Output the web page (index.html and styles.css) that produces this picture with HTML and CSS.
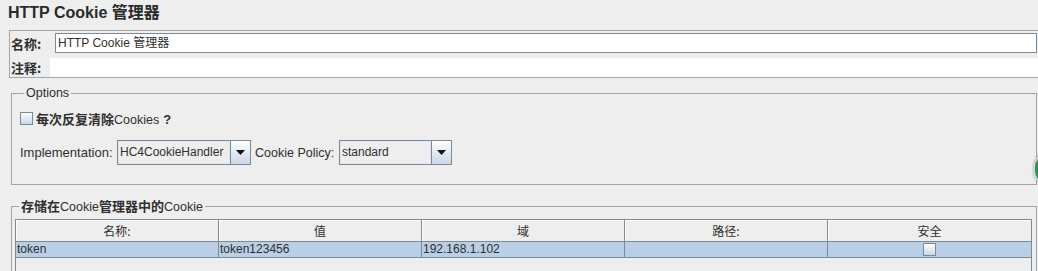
FILE: index.html
```html
<!DOCTYPE html>
<html lang="zh">
<head>
<meta charset="utf-8">
<title>HTTP Cookie 管理器</title>
<link rel="stylesheet" href="styles.css">
</head>
<body>
<div class="title">HTTP Cookie 管理器</div>

<div class="namebox">
  <div class="name-row">
    <span class="lbl lbl-name">名称:</span>
    <div class="input">HTTP Cookie 管理器</div>
  </div>
  <div class="comment-row">
    <span class="lbl lbl-comment">注释:</span>
    <div class="textarea"></div>
  </div>
</div>

<fieldset class="group options">
  <legend>Options</legend>
  <div class="chk-row">
    <span class="checkbox"></span>
    <span class="chk-label"><b class="cjk">每次反复清除</b>Cookies<b class="q">?</b></span>
  </div>
  <div class="combo-row">
    <span class="lbl2 lbl-impl">Implementation:</span>
    <div class="combo combo-impl">
      <span class="combo-text">HC4CookieHandler</span>
      <span class="combo-btn"><svg width="9" height="5" viewBox="0 0 9 5"><path d="M0 0H9L4.5 5Z" fill="#111"/></svg></span>
    </div>
    <span class="lbl2 lbl-policy">Cookie Policy:</span>
    <div class="combo combo-policy">
      <span class="combo-text">standard</span>
      <span class="combo-btn"><svg width="9" height="5" viewBox="0 0 9 5"><path d="M0 0H9L4.5 5Z" fill="#111"/></svg></span>
    </div>
  </div>
</fieldset>

<fieldset class="group cookies">
  <legend><b class="cjk">存储在</b>Cookie<b class="cjk">管理器中的</b>Cookie</legend>
  <div class="pane">
    <div class="thead">
      <div class="th">名称:</div>
      <div class="th">值</div>
      <div class="th">域</div>
      <div class="th">路径:</div>
      <div class="th">安全</div>
    </div>
    <div class="trow">
      <div class="td">token</div>
      <div class="td">token123456</div>
      <div class="td">192.168.1.102</div>
      <div class="td"></div>
      <div class="td td-check"><span class="checkbox"></span></div>
    </div>
  </div>
</fieldset>

<div class="fab"></div>
</body>
</html>
```

FILE: styles.css
```css
html, body {
  margin: 0;
  padding: 0;
  overflow: hidden;
}
body {
  background: #eeeeee;
  color: #2f2f2f;
  font-family: "Liberation Sans", "Noto Sans CJK SC", sans-serif;
  font-size: 12px;
  width: 1038px;
  height: 271px;
  position: relative;
}
.cjk {
  font-family: "Noto Sans CJK SC", sans-serif;
  font-weight: bold;
  font-size: 13px;
}
.q {
  font-weight: bold;
  font-size: 13px;
  margin-left: 4px;
}
.title {
  height: 30px;
  line-height: 26px;
  padding-left: 8px;
  font-size: 16px;
  font-weight: bold;
  color: #2a2a2a;
  white-space: nowrap;
}

/* name / comment box */
.namebox {
  margin: 0 -4px 0 9px;
  border: 1px solid #a5a5a5;
  border-right: none;
  padding-top: 2px;
}
.name-row, .comment-row {
  display: flex;
  align-items: center;
}
.lbl {
  font-family: "Noto Sans CJK SC", sans-serif;
  font-weight: bold;
  font-size: 13px;
  padding-left: 1px;
  box-sizing: border-box;
  white-space: nowrap;
}
.lbl-name { width: 45px; }
.lbl-comment { width: 40px; }
.input {
  flex: 1;
  height: 20px;
  box-sizing: border-box;
  border: 1px solid #7a8a99;
  background: #ffffff;
  margin-right: 5px;
  padding-left: 2px;
  line-height: 18px;
  font-size: 12px;
  white-space: nowrap;
}
.comment-row {
  margin-top: 5px;
  height: 19px;
}
.textarea {
  flex: 1;
  align-self: stretch;
  background: #ffffff;
}

/* group boxes */
.group {
  border: 1px solid #a3a3a3;
  padding: 0;
  min-width: 0;
}
.group legend {
  margin-left: 4px;
  padding: 0 2px;
  line-height: 14px;
  font-size: 12.5px;
  white-space: nowrap;
}
.options {
  margin: 8px 1px 0 11px;
  padding: 8px 0 19px 8px;
}
.chk-row {
  display: flex;
  align-items: center;
  height: 20px;
}
.checkbox {
  display: inline-block;
  width: 13px;
  height: 13px;
  box-sizing: border-box;
  border: 1px solid #7a8a99;
  background: linear-gradient(#ffffff, #c8d6e6);
}
.chk-label {
  margin-left: 3px;
  font-size: 12.5px;
  white-space: nowrap;
}
.combo-row {
  display: flex;
  align-items: center;
  margin-top: 12px;
  height: 25px;
}
.lbl2 {
  font-size: 13px;
  white-space: nowrap;
  box-sizing: border-box;
}
.lbl-impl { width: 97px; }
.lbl-policy { width: 88px; padding-left: 4px; font-size: 12.5px; }
.combo {
  display: flex;
  height: 25px;
  box-sizing: border-box;
  border: 1px solid #7a8a99;
  background: #eeeeee;
}
.combo-impl { width: 134px; }
.combo-policy { width: 113px; }
.combo-text {
  flex: 1;
  box-shadow: inset 0 0 0 1px #dfe6ee;
  padding-left: 2px;
  line-height: 23px;
  font-size: 12px;
  white-space: nowrap;
  overflow: hidden;
}
.combo-btn {
  width: 19px;
  border-left: 1px solid #7a8a99;
  background: linear-gradient(#ffffff, #c8d7e7);
  display: flex;
  align-items: center;
  justify-content: center;
}

/* cookie table */
.cookies {
  margin: 14px 1px 0 11px;
  padding: 5px 4px 0 3px;
  border-bottom: none;
}
.pane {
  border: 1px solid #7a8a99;
  border-bottom: none;
  height: 52px;
}
.thead, .trow {
  display: grid;
  grid-template-columns: repeat(5, 1fr);
}
.thead {
  height: 22px;
  box-sizing: border-box;
  border-bottom: 1px solid #7a8a99;
  background: #eeeeee;
}
.th {
  border-right: 1px solid #7a8a99;
  box-shadow: inset 1px 1px 0 #ffffff;
  text-align: center;
  line-height: 21px;
  font-family: "Noto Sans CJK SC", sans-serif;
  font-size: 12px;
}
.th:last-child { border-right: none; }
.trow {
  height: 16px;
  box-sizing: border-box;
  border-bottom: 1px solid #7a8a99;
  background: #b8cfe5;
}
.td {
  border-right: 1px solid #7a8a99;
  padding-left: 1px;
  line-height: 15px;
  font-size: 12px;
  white-space: nowrap;
}
.td:last-child { border-right: none; }
.td-check {
  display: flex;
  align-items: center;
  justify-content: center;
  padding-left: 0;
}

/* floating side button (overlay) */
.fab {
  position: absolute;
  left: 1033px;
  top: 152px;
  width: 40px;
  height: 30px;
  border-radius: 15px;
  background: #1f9a5a;
  border: 2px solid #d4d4d4;
  box-shadow: 0 0 2px rgba(0,0,0,0.3);
}
```
